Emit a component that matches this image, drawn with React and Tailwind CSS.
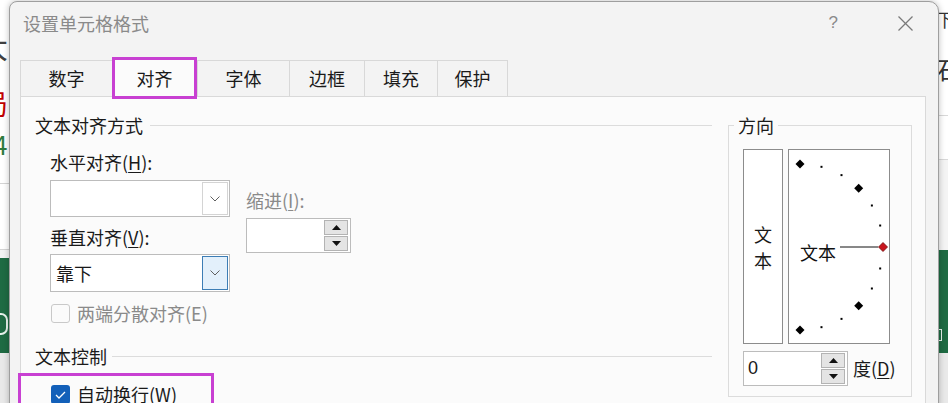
import React from "react";

const Chevron = () => (
  <svg width="10" height="6" viewBox="0 0 10 6">
    <polyline points="0.5,0.5 5,5 9.5,0.5" fill="none" stroke="#606060" strokeWidth="1" />
  </svg>
);

const Combo = ({ value, active }) => (
  <div className="h-full w-[180px] border border-[#bcbcbc] bg-white flex items-center justify-between pl-[5px] pr-[1px]">
    <span>{value}</span>
    <div
      className={
        active
          ? "h-[calc(100%-2px)] w-[26px] border border-[#3c7db5] bg-[#e3f0fb] flex items-center justify-center"
          : "h-[calc(100%-2px)] w-[26px] border border-[#d4d4d4] bg-white flex items-center justify-center"
      }
    >
      <Chevron />
    </div>
  </div>
);

const Arrows = () => (
  <div className="flex flex-col gap-[1px]">
    <div className="h-[15px] w-[24px] bg-[#e4e4e4] border border-[#b3b3b3] flex items-center justify-center">
      <svg width="9" height="5" viewBox="0 0 9 5">
        <polygon points="0,5 4.5,0 9,5" fill="#111" />
      </svg>
    </div>
    <div className="h-[15px] w-[24px] bg-[#e4e4e4] border border-[#b3b3b3] flex items-center justify-center">
      <svg width="9" height="5" viewBox="0 0 9 5">
        <polygon points="0,0 4.5,5 9,0" fill="#111" />
      </svg>
    </div>
  </div>
);

const Dial = () => {
  const pts = [];
  for (let i = -6; i <= 6; i++) {
    const a = (i * 15 * Math.PI) / 180;
    pts.push({ i, x: 11 + 83 * Math.cos(a), y: 97 - 83 * Math.sin(a) });
  }
  const diamond = (x, y, r) => `${x},${y - r} ${x + r},${y} ${x},${y + r} ${x - r},${y}`;
  return (
    <svg width="100" height="193" viewBox="0 0 100 193">
      <line x1="51" y1="97" x2="89" y2="97" stroke="#111" strokeWidth="1" />
      {pts.map((p) =>
        p.i === 0 ? (
          <polygon key={p.i} points={diamond(p.x, p.y, 4.5)} fill="#c8161e" stroke="#6e0a0a" strokeWidth="0.8" />
        ) : p.i % 3 === 0 ? (
          <polygon key={p.i} points={diamond(p.x, p.y, 4.5)} fill="#000" />
        ) : (
          <rect key={p.i} x={p.x - 1} y={p.y - 1} width="2" height="2" fill="#000" />
        )
      )}
      <text x="11" y="110" fontSize="18" fill="#111" fontFamily="'Noto Sans CJK SC', sans-serif">
        文本
      </text>
    </svg>
  );
};

const tabs = [
  { name: "数字", w: "w-[92px]" },
  { name: "对齐", w: "w-[85px]", active: true },
  { name: "字体", w: "w-[92px]" },
  { name: "边框", w: "w-[75px]" },
  { name: "填充", w: "w-[73px]" },
  { name: "保护", w: "w-[71px]" },
];

const App = () => {
  return (
    <div className="relative w-[948px] h-[403px] overflow-hidden bg-white text-[18px] text-[#1a1a1a] font-['Noto_Sans_CJK_SC','Liberation_Sans',sans-serif]">
      {/* spreadsheet behind the dialog */}
      <div className="flex w-full h-full">
        <div className="w-[10px] h-full flex flex-col overflow-hidden bg-white">
          <div className="h-[28px]"></div>
          <div className="h-[34px] leading-[34px] text-[30px] text-[#404040] -ml-[22px] whitespace-nowrap">大</div>
          <div className="h-[26px]"></div>
          <div className="h-[30px] leading-[30px] text-[28px] text-[#c00000] -ml-[20px] whitespace-nowrap">局</div>
          <div className="h-[12px]"></div>
          <div className="h-[28px] leading-[28px] text-[26px] text-[#2e7b3e] -ml-[7px] whitespace-nowrap">4</div>
          <div className="h-[26px] border-b border-[#d4d4d4]"></div>
          <div className="h-[66px] border-b border-[#d4d4d4]"></div>
          <div className="h-[8px] bg-[#f3f3f3]"></div>
          <div className="h-[95px] bg-[#1f6b43] flex flex-col justify-end pb-[18px]">
            <div className="h-[22px] w-[14px] -ml-[6px] rounded-full border-2 border-[#e8f2ec]"></div>
          </div>
          <div className="flex-1 bg-[#e9e9e9]"></div>
        </div>
        <div className="flex-1"></div>
        <div className="w-[10px] h-full flex flex-col overflow-hidden bg-white">
          <div className="h-[8px]"></div>
          <div className="h-[22px] leading-[22px] text-[18px] text-[#333] -ml-[2px] whitespace-nowrap">下</div>
          <div className="h-[26px]"></div>
          <div className="h-[26px] leading-[26px] text-[24px] text-[#333] -ml-[2px] whitespace-nowrap">石</div>
          <div className="h-[34px] border-b border-[#d8d8d8]"></div>
          <div className="h-[44px] border-b border-[#d8d8d8]"></div>
          <div className="h-[90px] bg-[#f4f4f4]"></div>
          <div className="h-[103px] bg-[#1f6b43] flex flex-col justify-end pb-[12px]">
            <div className="h-[12px] w-[4px] border border-[#e8f2ec]"></div>
          </div>
          <div className="flex-1 bg-[#e9e9e9]"></div>
        </div>
      </div>

      {/* dialog */}
      <div className="absolute left-[9px] top-[1px] w-[930px] h-[440px] rounded-tl-[8px] rounded-tr-[10px] border border-[#9e9e9e] bg-[#f3f3f3] shadow-[0_0_6px_rgba(0,0,0,0.25)] flex flex-col">
        <div className="h-[42px] flex items-center justify-between pl-[13px] pr-[25px]">
          <span className="text-[#8a8a8a]">设置单元格格式</span>
          <div className="flex items-center gap-[60px] text-[#8a8a8a]">
            <span className="text-[17px] font-['Liberation_Sans',sans-serif]">?</span>
            <svg width="15" height="15" viewBox="0 0 15 15">
              <line x1="0.5" y1="0.5" x2="14.5" y2="14.5" stroke="#7a7a7a" strokeWidth="1.2" />
              <line x1="14.5" y1="0.5" x2="0.5" y2="14.5" stroke="#7a7a7a" strokeWidth="1.2" />
            </svg>
          </div>
        </div>

        <div className="mt-[13px] ml-[10px] h-[39px] flex items-end">
          {tabs.map((t, i) =>
            t.active ? (
              <div
                key={t.name}
                className={`${t.w} h-[42px] -mb-[3px] relative z-10 border-[3px] border-[#c840d2] bg-[#fbfbfb] flex items-center justify-center`}
              >
                {t.name}
              </div>
            ) : (
              <div
                key={t.name}
                className={
                  i === tabs.length - 1
                    ? `${t.w} h-[36px] border-t border-l border-r border-[#d8d8d8] bg-[#f3f3f3] flex items-center justify-center`
                    : `${t.w} h-[36px] border-t border-l border-[#d8d8d8] bg-[#f3f3f3] flex items-center justify-center`
                }
              >
                {t.name}
              </div>
            )
          )}
        </div>

        <div className="relative ml-[10px] w-[906px] flex-1 border border-[#d9d9d9] bg-[#fbfbfb] flex pl-[14px]">
          {/* left column */}
          <div className="w-[677px] pt-[15px] flex flex-col">
            <div className="h-[26px] flex items-center">
              <span>文本对齐方式</span>
              <div className="flex-1 ml-[7px] border-t border-[#dcdcdc]"></div>
            </div>
            <div className="pl-[15px] flex flex-col">
              <div className="flex">
                <div className="w-[180px] flex flex-col">
                  <div className="mt-[12px] h-[24px] leading-[24px]">
                    水平对齐(<span className="underline underline-offset-2">H</span>):
                  </div>
                  <div className="mt-[6px] h-[37px]">
                    <Combo value="" />
                  </div>
                  <div className="mt-[8px] h-[24px] leading-[24px]">
                    垂直对齐(<span className="underline underline-offset-2">V</span>):
                  </div>
                  <div className="mt-[5px] h-[38px]">
                    <Combo value="靠下" active />
                  </div>
                </div>
                <div className="ml-[16px] flex flex-col">
                  <div className="mt-[50px] h-[24px] leading-[24px] text-[#8a8a8a]">
                    缩进(<span className="underline underline-offset-2">I</span>):
                  </div>
                  <div className="mt-[6px] h-[35px] w-[105px] border border-[#bcbcbc] bg-white flex items-center justify-end pr-[2px]">
                    <Arrows />
                  </div>
                </div>
              </div>
              <div className="mt-[12px] h-[19px] flex items-center">
                <div className="ml-[1px] w-[19px] h-[19px] rounded-[3px] border border-[#c9c9c9] bg-[#fbfbfb]"></div>
                <span className="ml-[7px] text-[#8a8a8a]">两端分散对齐(E)</span>
              </div>
            </div>
            <div className="mt-[21px] h-[24px] flex items-center">
              <span>文本控制</span>
              <div className="flex-1 ml-[5px] border-t border-[#dcdcdc]"></div>
            </div>
            <div className="mt-[17px] pl-[16px] h-[19px] flex items-center">
              <div className="w-[19px] h-[19px] rounded-[3px] bg-[#1360b9] flex items-center justify-center">
                <svg width="11" height="8" viewBox="0 0 11 8">
                  <polyline points="1,4 4,7 10,1" fill="none" stroke="#fff" strokeWidth="1.3" />
                </svg>
              </div>
              <span className="ml-[7px]">自动换行(W)</span>
            </div>
          </div>

          {/* orientation group */}
          <div className="ml-[16px] mt-[28px] w-[184px] h-[272px] border border-[#dcdcdc] flex flex-col pl-[14px]">
            <div className="-mt-[13px] -ml-[9px] w-fit px-[4px] h-[24px] leading-[24px] bg-[#fbfbfb]">方向</div>
            <div className="mt-[12px] flex gap-[5px]">
              <div className="w-[40px] h-[195px] border border-[#8c8c8c] bg-white flex flex-col items-center justify-center leading-[26px]">
                <span>文</span>
                <span>本</span>
              </div>
              <div className="w-[102px] h-[195px] border border-[#8c8c8c] bg-white">
                <Dial />
              </div>
            </div>
            <div className="mt-[7px] flex items-center">
              <div className="h-[35px] w-[105px] border border-[#bcbcbc] bg-white flex items-center justify-between pl-[4px] pr-[2px]">
                <span className="font-['Liberation_Sans',sans-serif] text-[18px]">0</span>
                <Arrows />
              </div>
              <span className="ml-[5px]">
                度(<span className="underline underline-offset-2">D</span>)
              </span>
            </div>
          </div>
        </div>

        {/* annotation box */}
        <div className="absolute left-[8px] top-[371px] w-[196px] h-[44px] border-[3px] border-[#c840d2]"></div>
      </div>
    </div>
  );
};

export default App;
